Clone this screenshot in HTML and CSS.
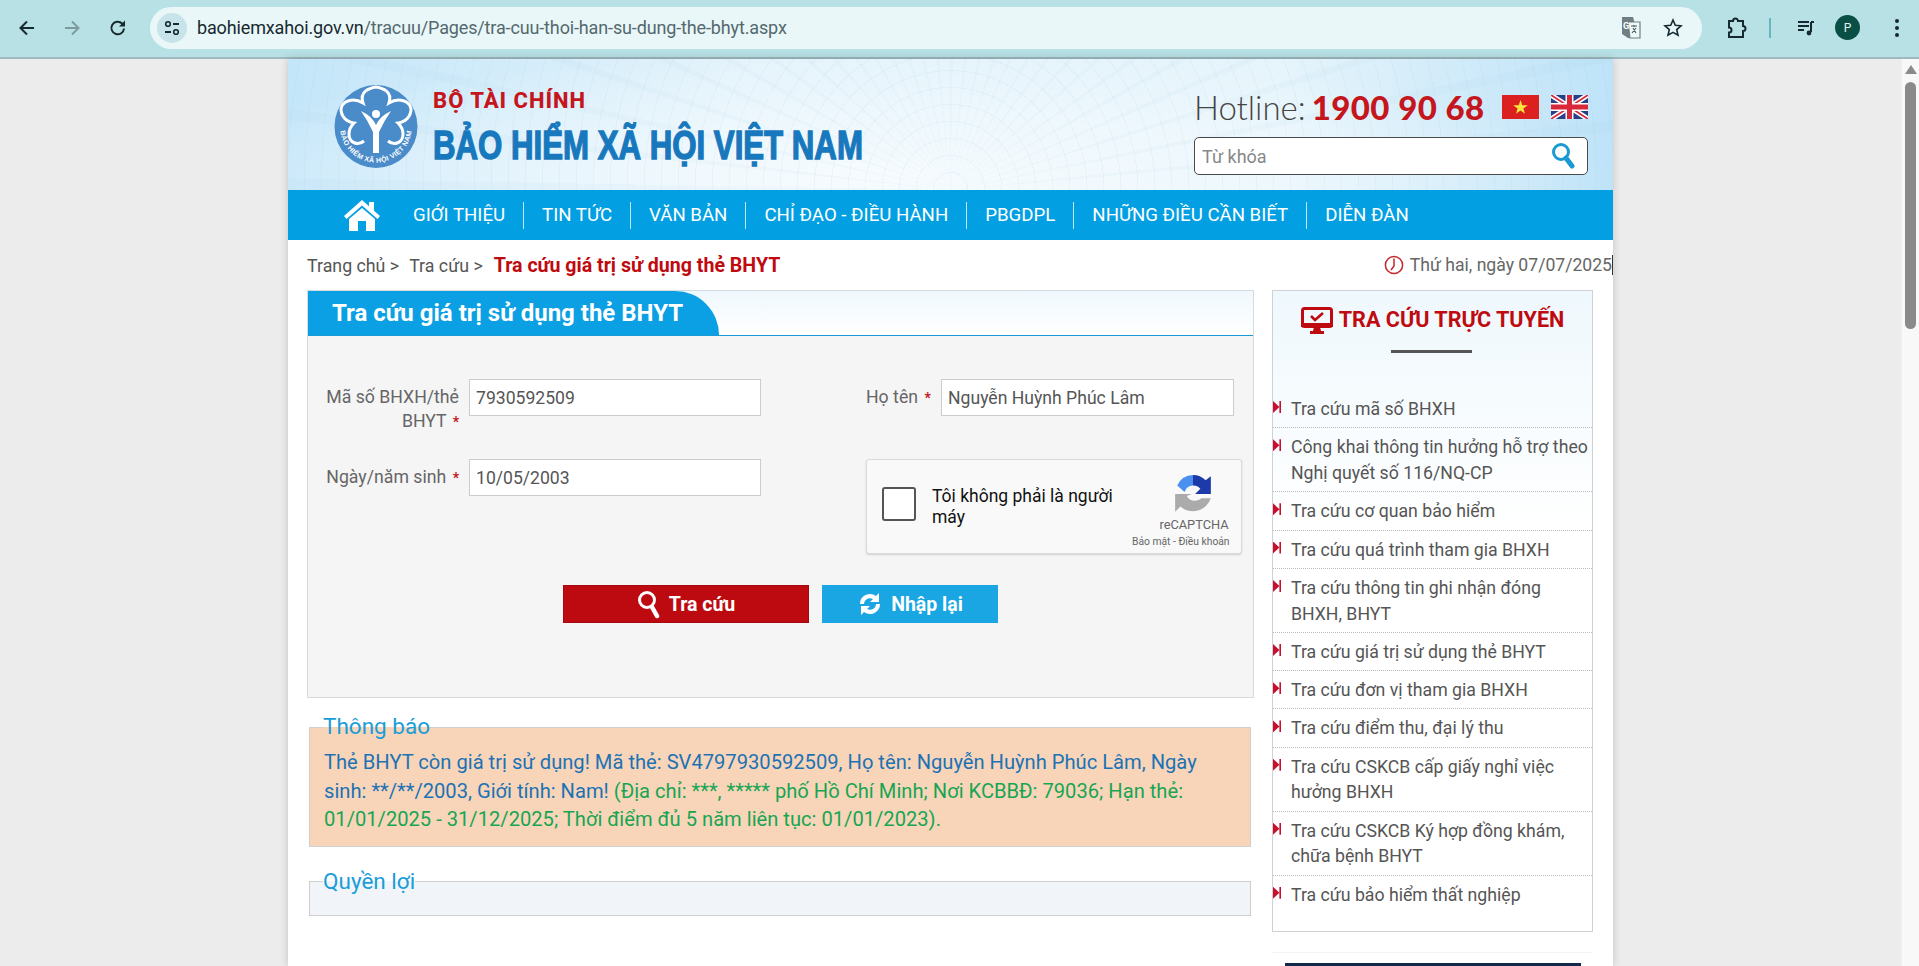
FILE: index.html
```html
<!DOCTYPE html>
<html lang="vi">
<head>
<meta charset="utf-8">
<title>Tra cứu giá trị sử dụng thẻ BHYT</title>
<link rel="stylesheet" href="styles.css">
</head>
<body>
<div class="chrome">
  <svg class="tb back" width="20" height="20" viewBox="0 0 20 20"><path d="M17 10H4M10 3.5 3.5 10l6.5 6.5" fill="none" stroke="#16292e" stroke-width="2"/></svg>
  <svg class="tb fwd" width="20" height="20" viewBox="0 0 20 20"><path d="M3 10h13M10 3.5 16.500 10 10 16.500" fill="none" stroke="#7f9a9e" stroke-width="2"/></svg>
  <svg class="tb reload" width="20" height="20" viewBox="0 0 20 20"><path d="M16 10.500a6.300 6.300 0 1 1-1.900-5L16 7.300" fill="none" stroke="#16292e" stroke-width="2"/><path d="M17 2.500v6h-6z" fill="#16292e"/></svg>
  <div class="omnibox">
    <span class="site-info"><svg width="18" height="18" viewBox="0 0 18 18"><circle cx="5" cy="5" r="2.300" fill="none" stroke="#16292e" stroke-width="1.600"/><path d="M10 5h6M2 13h6" stroke="#16292e" stroke-width="1.800"/><circle cx="13" cy="13" r="2.300" fill="none" stroke="#16292e" stroke-width="1.600"/></svg></span>
    <span class="url"><span class="url-host">baohiemxahoi.gov.vn</span>/tracuu/Pages/tra-cuu-thoi-han-su-dung-the-bhyt.aspx</span>
    <svg class="omni-translate" width="22" height="24" viewBox="0 0 22 24"><path d="M2 1h11l6 21H8L2 18z" fill="#6f7f83"/><path d="M8 6h12v16H10z" fill="#eef8fa" stroke="#6f7f83" stroke-width="1.200"/><text x="3" y="13" class="gt">G</text><path d="M11 10h6M14 9v2M12 17l4-5M13 12l3 5" stroke="#4d5c60" stroke-width="1.100" fill="none"/></svg>
    <svg class="omni-star" width="20" height="20" viewBox="0 0 20 20"><path d="M10 2l2.300 5.300 5.700.5-4.300 3.800 1.300 5.600L10 14.300 5 17.200l1.300-5.600L2 7.800l5.700-.5z" fill="none" stroke="#16292e" stroke-width="1.600"/></svg>
  </div>
  <svg class="tb ext" width="22" height="24" viewBox="0 0 22 24"><path d="M4 5h4a2.500 2.500 0 0 1 5 0h5v5a2.500 2.500 0 0 1 0 5v6H4v-4.500a2.500 2.500 0 0 0 0-5z" fill="none" stroke="#16292e" stroke-width="2"/></svg>
  <span class="tb-sep"></span>
  <svg class="tb media" width="20" height="20" viewBox="0 0 20 20"><path d="M2 4h11M2 8h11M2 12h6M15 4v10" stroke="#16292e" stroke-width="2" fill="none"/><circle cx="13" cy="15" r="2.400" fill="#16292e"/><path d="M15 4h3" stroke="#16292e" stroke-width="2"/></svg>
  <span class="avatar">P</span>
  <svg class="tb dots" width="6" height="20" viewBox="0 0 6 20"><circle cx="3" cy="3" r="2" fill="#16292e"/><circle cx="3" cy="10" r="2" fill="#16292e"/><circle cx="3" cy="17" r="2" fill="#16292e"/></svg>
</div>

<div class="viewport">
  <div class="page-wrap">
    <div class="page">
      <header class="site-header">
        <svg class="logo" width="84" height="87" viewBox="0 0 84 87">
          <circle cx="42" cy="43.500" r="41.500" fill="#4a8bca"/>
          <path d="M30 58C24 63 15 60 15 51C15 46 17 43 20 40C12 39 7 33 7 26C8 18 19 14 29 20C25 8 36 5 42 4C48 5 59 8 55 20C65 14 76 18 77 26C77 33 72 39 64 40C67 43 69 46 69 51C69 60 60 63 54 58" fill="none" stroke="#fff" stroke-width="3"/>
          <circle cx="42" cy="31" r="4" fill="#fff"/>
          <path d="M27 28Q38 33 42 42Q46 33 57 28Q50 38 45 49L45 70L39 70L39 49Q34 38 27 28Z" fill="#fff"/>
          <defs><path id="ring" d="M6.800 36A36 36 0 1 0 77.200 36"/></defs>
          <text class="logo-ring"><textPath href="#ring" startOffset="50%" text-anchor="middle">BẢO HIỂM XÃ HỘI VIỆT NAM</textPath></text>
        </svg>
        <div class="brand">
          <div class="brand-top">BỘ TÀI CHÍNH</div>
          <div class="brand-main">BẢO HIỂM XÃ HỘI VIỆT NAM</div>
        </div>
        <div class="header-right">
          <div class="hotline">
            <span class="hotline-label">Hotline:</span>
            <span class="hotline-num">1900 90 68</span>
            <svg class="flag-vn" width="37" height="24" viewBox="0 0 37 24"><rect width="37" height="24" fill="#dc2020"/><path d="M18.500 5l1.800 5.200h5.500l-4.400 3.300 1.600 5.300-4.500-3.200-4.500 3.200 1.600-5.300-4.400-3.300h5.500z" fill="#fbe23c"/></svg>
            <svg class="flag-uk" width="37" height="24" viewBox="0 0 37 24"><rect width="37" height="24" fill="#2b3f87"/><path d="M0 0l37 24M37 0 0 24" stroke="#fff" stroke-width="5"/><path d="M0 0l37 24M37 0 0 24" stroke="#d8283a" stroke-width="1.800"/><path d="M18.500 0v24M0 12h37" stroke="#fff" stroke-width="8"/><path d="M18.500 0v24M0 12h37" stroke="#d8283a" stroke-width="5"/></svg>
          </div>
          <div class="search-box">
            <input class="search-input" type="text" placeholder="Từ khóa">
            <svg width="24" height="28" viewBox="0 0 24 28"><circle cx="10" cy="10" r="7.500" fill="none" stroke="#1a9ad2" stroke-width="3"/><path d="M15 16l6 8" stroke="#1a9ad2" stroke-width="5" stroke-linecap="round"/></svg>
          </div>
        </div>
      </header>

      <nav class="main-nav">
        <svg class="home" width="36" height="32" viewBox="0 0 36 32"><path d="M18 1 0 17l2.500 3L18 6.500 33.500 20l2.500-3-6-5.300V3h-5v4.300z" fill="#fff"/><path d="M5 20 18 9l13 11v12h-9V22h-8v10H5z" fill="#fff"/></svg>
        <a class="nav-item nav-first">GIỚI THIỆU</a>
        <a class="nav-item">TIN TỨC</a>
        <a class="nav-item">VĂN BẢN</a>
        <a class="nav-item">CHỈ ĐẠO - ĐIỀU HÀNH</a>
        <a class="nav-item">PBGDPL</a>
        <a class="nav-item">NHỮNG ĐIỀU CẦN BIẾT</a>
        <a class="nav-item">DIỄN ĐÀN</a>
      </nav>

      <div class="crumbs">
        <span class="crumb">Trang chủ &gt;</span>
        <span class="crumb">Tra cứu &gt;</span>
        <span class="crumb-current">Tra cứu giá trị sử dụng thẻ BHYT</span>
        <span class="date-wrap">
          <svg width="20" height="20" viewBox="0 0 20 20"><circle cx="10" cy="10" r="8.600" fill="none" stroke="#c2282e" stroke-width="1.500"/><path d="M10 3.500V11L7 15" fill="none" stroke="#c2282e" stroke-width="1.500"/></svg>
          <span class="date">Thứ hai, ngày 07/07/2025</span>
        </span>
      </div>

      <div class="columns">
        <main class="main-col">
          <section class="panel">
            <div class="panel-head"><h1 class="panel-tab">Tra cứu giá trị sử dụng thẻ BHYT</h1></div>
            <div class="panel-body">
              <div class="form-cols">
                <div class="form-left">
                  <div class="field field-tall">
                    <label class="label">Mã số BHXH/thẻ BHYT <b class="req">*</b></label>
                    <input class="text-input" type="text" value="7930592509">
                  </div>
                  <div class="field">
                    <label class="label">Ngày/năm sinh <b class="req">*</b></label>
                    <input class="text-input" type="text" value="10/05/2003">
                  </div>
                </div>
                <div class="form-right">
                  <div class="field field-tall">
                    <label class="label label-short">Họ tên <b class="req">*</b></label>
                    <input class="text-input text-input-wide" type="text" value="Nguyễn Huỳnh Phúc Lâm">
                  </div>
                  <div class="captcha">
                    <span class="captcha-box"></span>
                    <span class="captcha-text">Tôi không phải là người máy</span>
                    <div class="captcha-brand">
                      <svg width="40" height="42" viewBox="0 0 38 40">
                        <path d="M19 2A17 17 0 0 0 4 12l7 6a8 8 0 0 1 8-6z" fill="#4a90ee"/>
                        <path d="M19 2a17 17 0 0 1 12 5l5-4v17H21l5-5a9 9 0 0 0-7-3z" fill="#1c3aa9"/>
                        <path d="M2 20v17l5-5A18 18 0 0 0 36 24h-9a9 9 0 0 1-14-2l5-2z" fill="#ababab"/>
                      </svg>
                      <span class="captcha-name">reCAPTCHA</span>
                      <span class="captcha-links">Bảo mật - Điều khoản</span>
                    </div>
                  </div>
                </div>
              </div>
              <div class="actions">
                <button class="btn btn-red" type="button"><svg width="24" height="30" viewBox="0 0 24 30"><circle cx="10" cy="11" r="7.500" fill="none" stroke="#fff" stroke-width="3"/><path d="M15 18l5 9" stroke="#fff" stroke-width="4.500" stroke-linecap="round"/></svg>Tra cứu</button>
                <button class="btn btn-blue" type="button"><svg width="26" height="28" viewBox="0 0 26 28"><path d="M3 14A10 10 0 0 1 19 6l3-3v9h-9l3-3a6 6 0 0 0-9 5z" fill="#fff"/><path d="M23 14A10 10 0 0 1 7 22l-3 3v-9h9l-3 3a6 6 0 0 0 9-5z" fill="#fff"/></svg>Nhập lại</button>
              </div>
            </div>
          </section>

          <fieldset class="notice">
            <legend class="legend">Thông báo</legend>
            <p class="notice-text"><span class="t-blue">Thẻ BHYT còn giá trị sử dụng! Mã thẻ: SV4797930592509, Họ tên: Nguyễn Huỳnh Phúc Lâm, Ngày sinh: **/**/2003, Giới tính: Nam!</span> <span class="t-green">(Địa chỉ: ***, ***** phố Hồ Chí Minh; Nơi KCBBĐ: 79036; Hạn thẻ: 01/01/2025 - 31/12/2025; Thời điểm đủ 5 năm liên tục: 01/01/2023).</span></p>
          </fieldset>
          <fieldset class="rights">
            <legend class="legend">Quyền lợi</legend>
          </fieldset>
        </main>

        <aside class="side-col">
          <div class="side-box">
            <h2 class="side-title"><svg width="32" height="27" viewBox="0 0 32 27"><rect x="1.500" y="1.500" width="29" height="18" rx="2" fill="none" stroke="#bf0a0f" stroke-width="3"/><path d="M0 16h32v4H0zM13 20h6l1 4h3v3H9v-3h3z" fill="#bf0a0f"/><path d="M10 9l4 4 8-7" fill="none" stroke="#bf0a0f" stroke-width="2.600"/></svg>TRA CỨU TRỰC TUYẾN</h2>
            <div class="side-dash"></div>
            <ul class="side-list">
              <li class="side-item">Tra cứu mã số BHXH</li>
              <li class="side-item">Công khai thông tin hưởng hỗ trợ theo Nghị quyết số 116/NQ-CP</li>
              <li class="side-item">Tra cứu cơ quan bảo hiểm</li>
              <li class="side-item">Tra cứu quá trình tham gia BHXH</li>
              <li class="side-item">Tra cứu thông tin ghi nhận đóng BHXH, BHYT</li>
              <li class="side-item">Tra cứu giá trị sử dụng thẻ BHYT</li>
              <li class="side-item">Tra cứu đơn vị tham gia BHXH</li>
              <li class="side-item">Tra cứu điểm thu, đại lý thu</li>
              <li class="side-item">Tra cứu CSKCB cấp giấy nghỉ việc hưởng BHXH</li>
              <li class="side-item">Tra cứu CSKCB Ký hợp đồng khám, chữa bệnh BHYT</li>
              <li class="side-item">Tra cứu bảo hiểm thất nghiệp</li>
            </ul>
          </div>
          <div class="side-next"></div>
        </aside>
      </div>
    </div>
  </div>
  <div class="scrollbar">
    <span class="scroll-up"></span>
    <span class="scroll-thumb"></span>
  </div>
</div>
</body>
</html>
```
FILE: styles.css
```css
* { box-sizing: border-box; }
html, body { margin: 0; height: 966px; overflow: hidden; }
body { display: flex; flex-direction: column; background: #ececec; font-family: Roboto, "Noto Sans", sans-serif; color: #555; }

/* browser toolbar */
.chrome { flex: 0 0 59px; height: 59px; display: flex; align-items: center; background: #b8e1e5; border-bottom: 2px solid #9fb9be; padding: 0 0 2px 17px; }
.tb { flex: none; }
.fwd { margin-left: 25px; }
.reload { margin-left: 26px; }
.omnibox { display: flex; align-items: center; width: 1552px; height: 42px; margin-left: 22px; padding: 0 19px 0 7px; border-radius: 21px; background: #e9f7f9; }
.site-info { display: flex; align-items: center; justify-content: center; width: 30px; height: 30px; border-radius: 50%; background: #c6e4e9; flex: none; }
.url { margin-left: 10px; font-size: 18px; color: #54696d; flex: 1; letter-spacing: -.14px; }
.url-host { color: #16292e; }
.gt { font: bold 9px Roboto, sans-serif; fill: #fff; }
.omni-star { margin-left: 21px; }
.ext { margin-left: 23px; }
.tb-sep { width: 2px; height: 20px; background: #68b6bf; margin-left: 22px; flex: none; }
.media { margin-left: 25px; }
.avatar { display: flex; align-items: center; justify-content: center; width: 25px; height: 25px; border-radius: 50%; background: #0a4f45; color: #e6f3ee; font-size: 12px; margin-left: 19px; flex: none; }
.dots { margin-left: 34px; }

/* viewport */
.viewport { flex: 1; min-height: 0; display: flex; }
.page-wrap { flex: 1; min-width: 0; display: flex; justify-content: center; }
.page { width: 1325px; background: #fff; box-shadow: 0 0 8px rgba(0, 0, 0, .18); overflow: hidden; }
.scrollbar { flex: 0 0 18px; display: flex; flex-direction: column; align-items: center; background: #f8f8f8; border-left: 1px solid #f0f0f0; padding-top: 6px; }
.scroll-up { width: 0; height: 0; border-left: 6px solid transparent; border-right: 6px solid transparent; border-bottom: 9px solid #8a8a8a; }
.scroll-thumb { width: 11px; height: 247px; margin-top: 8px; border-radius: 6px; background: #8a8a8a; }

/* header */
.site-header { height: 131px; display: flex; align-items: flex-start; padding: 24px 25px 0 46px;
  background:
    repeating-conic-gradient(from 0deg at 50% 100%, rgba(140, 190, 220, .06) 0 1deg, transparent 1deg 6deg),
    repeating-radial-gradient(circle at 50% 100%, rgba(140, 190, 220, .10) 0 1px, transparent 1px 17px),
    radial-gradient(ellipse 55% 95% at 45% 90%, #f6fbfe 0, rgba(246, 251, 254, 0) 100%),
    linear-gradient(90deg, #c4e6f9 0, #e4f3fb 35%, #e6f4fb 75%, #bee3f8 100%); }
.logo { flex: none; }
.logo-ring { font: bold 7px "Liberation Sans", Arial, sans-serif; fill: #fff; letter-spacing: .3px; }
.brand { margin-left: 15px; }
.brand-top { font: 800 22px/26px Roboto, sans-serif; color: #c5161d; letter-spacing: 1px; margin-top: 5px; }
.brand-main { font: bold 40px/44px "Liberation Sans", sans-serif; color: #1878bd; white-space: nowrap; -webkit-text-stroke: 1.4px #1878bd; margin-top: 9px; transform: scaleX(.78); transform-origin: left center; }
.header-right { margin-left: auto; display: flex; flex-direction: column; width: 394px; margin-top: 5px; }
.hotline { display: flex; align-items: center; height: 38px; }
.hotline-label { font: 300 33px/38px Lato, sans-serif; color: #444; }
.hotline-num { font: 900 33px/38px Lato, sans-serif; color: #c5161d; margin-left: 6px; letter-spacing: .4px; }
.flag-vn { margin-left: auto; }
.flag-uk { margin-left: 12px; }
.search-box { display: flex; align-items: center; height: 38px; margin-top: 11px; padding: 0 12px 0 7px; background: #fff; border: 1px solid #4a4a4a; border-radius: 5px; }
.search-input { flex: 1; min-width: 0; border: 0; outline: 0; background: transparent; padding: 0; font: 18px Roboto, sans-serif; color: #777; }
.search-input::placeholder { color: #888; opacity: 1; }

/* nav */
.main-nav { height: 50px; display: flex; align-items: center; background: #039fe3; padding-left: 56px; }
.home { flex: none; margin-right: 15px; }
.nav-item { display: flex; align-items: center; height: 27px; padding: 0 18px; border-left: 1px solid rgba(255, 255, 255, .75); font-size: 18.650px; color: #fff; white-space: nowrap; }
.nav-first { border-left: 0; padding-left: 18px; }

/* breadcrumbs */
.crumbs { height: 50px; display: flex; align-items: center; padding-left: 19px; font-size: 17.800px; }
.crumb { margin-right: 10px; color: #555; }
.crumb-current { font-size: 19.600px; font-weight: 700; color: #bf0a0f; margin-left: 1px; }
.date-wrap { margin-left: auto; display: flex; align-items: center; gap: 6px; }
.date { color: #666; font-size: 17.600px; white-space: nowrap; border-right: 1px solid #333; line-height: 20px; }

/* columns */
.columns { display: flex; padding-left: 19px; gap: 18px; align-items: flex-start; }
.main-col { width: 947px; flex: none; }
.side-col { width: 321px; flex: none; }

/* panel */
.panel { border: 1px solid #d5dbde; height: 408px; display: flex; flex-direction: column; }
.panel-head { height: 45px; flex: none; background: linear-gradient(#eff8fc, #fff); border-bottom: 1px solid #1a9ad2; }
.panel-tab { margin: 0; width: 411px; height: 44px; padding-left: 24px; background: #0b9fe3; border-top-right-radius: 44px 44px; color: #fff; font: 700 24px/44px Roboto, sans-serif; white-space: nowrap; }
.panel-body { flex: 1; background: #f5f5f5; padding: 43px 0 0 12px; }
.form-cols { display: flex; height: 206px; }
.form-left { width: 546px; flex: none; }
.form-right { width: 376px; flex: none; }
.field { display: flex; align-items: flex-start; height: 80px; }
.label { width: 139px; flex: none; text-align: right; font-size: 17.700px; line-height: 24px; padding-top: 6px; color: #666; margin-right: 10px; }
.label-short { width: 69px; margin-right: 6px; white-space: nowrap; text-align: left; }
.req { color: #c5161d; font-size: 14px; margin-left: 2px; }
.text-input { width: 292px; height: 37px; flex: none; border: 1px solid #ccc; background: #fff; padding: 0 6px; font: 17.600px Roboto, sans-serif; color: #555; outline: 0; }
.text-input-wide { width: 293px; }
.captcha { display: flex; align-items: flex-start; height: 95px; width: 376px; padding: 27px 12px 0 15px; background: #f9f9f9; border: 1px solid #d9d9d9; border-radius: 3px; box-shadow: 0 1px 2px rgba(0, 0, 0, .15); }
.captcha-box { flex: none; width: 34px; height: 34px; background: #fff; border: 2px solid #555; border-radius: 3px; }
.captcha-text { flex: none; width: 200px; margin-left: 16px; margin-top: -1px; font-size: 17.500px; line-height: 21px; color: #111; }
.captcha-brand { flex: 1; display: flex; flex-direction: column; align-items: flex-end; margin-top: -14px; white-space: nowrap; }
.captcha-brand svg { margin-right: 17px; }
.captcha-name { font-size: 12.800px; line-height: 16px; color: #666; margin-top: 2px; margin-right: 1px; }
.captcha-links { font-size: 10.300px; line-height: 14px; color: #666; margin-top: 2px; }
.actions { display: flex; justify-content: center; gap: 13px; padding-right: 12px; }
.btn { display: flex; align-items: center; justify-content: center; gap: 8px; height: 38px; border: 0; color: #fff; font: 700 19.500px Roboto, sans-serif; padding: 0; }
.btn-red { width: 246px; background: #bd0a10; border: 1px solid #a50a0e; }
.btn-blue { width: 176px; background: #1aa6e2; }

/* notices */
.notice, .rights { margin: 0; min-width: 0; width: 942px; margin-left: 2px; padding: 0 14px; border: 1px solid #cfcfcf; }
.notice { margin-top: 12.500px; background: #f8d5b8; height: 136.500px; }
.rights { margin-top: 19px; background: #f1f5f9; height: 50px; }
.legend { padding: 0; margin: 0 0 0 -1px; font-size: 22.500px; line-height: 30px; color: #1a9dd9; }
.notice .legend { padding-bottom: 3px; }
.notice-text { margin: 4.500px 0 0; font-size: 20.150px; line-height: 28.500px; }
.t-blue { color: #1b72b5; }
.t-green { color: #17a554; }

/* sidebar */
.side-box { height: 642px; border: 1px solid #ccd2d6; background: linear-gradient(#eff8fd 0, #fff 240px); padding-top: 11px; }
.side-title { margin: 0; display: flex; align-items: center; justify-content: center; gap: 6px; font: 700 21.600px/36px Roboto, sans-serif; color: #bf0a0f; }
.side-dash { width: 81px; height: 3px; background: #555; margin: 12px 0 0 118px; }
.side-list { list-style: none; margin: 37px 0 0; padding: 0; }
.side-item { position: relative; padding: 7px 0 4.600px 18px; border-bottom: 1px dotted #bbb; font-size: 17.700px; line-height: 25.700px; color: #555; }
.side-item:last-child { border-bottom: 0; }
.side-item::before { content: ""; position: absolute; left: 0; top: 11px; width: 8px; height: 12px; background: #c8102e; clip-path: polygon(0 0, 80% 50%, 80% 0, 100% 0, 100% 100%, 80% 100%, 80% 50%, 0 100%); }
.side-next { height: 30px; margin: 20px 0 0; border-top: 1px solid #f3f3f3; padding: 0 12px; }
.side-next::before { content: ""; display: block; width: 296px; height: 20px; margin: 10px auto 0; background: #12294b; }
```
